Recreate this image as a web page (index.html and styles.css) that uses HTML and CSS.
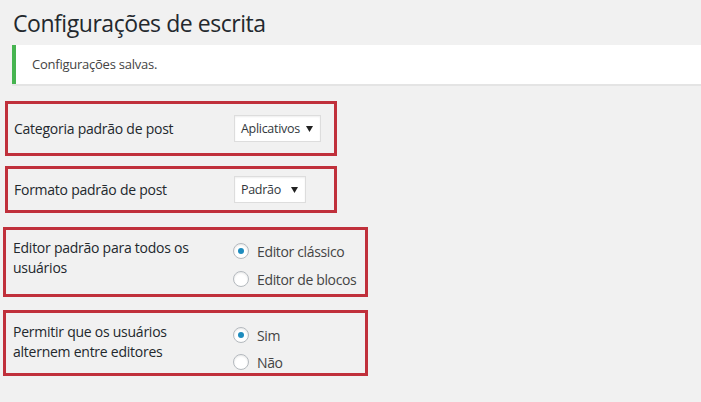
FILE: index.html
```html
<!DOCTYPE html>
<html lang="pt-BR">
<head>
<meta charset="utf-8">
<title>Configurações de escrita</title>
<link rel="stylesheet" href="styles.css">
</head>
<body>
<div class="page">
  <h1 class="title">Configurações de escrita</h1>
  <div class="notice"><p>Configurações salvas.</p></div>
  <div class="settings">
    <div class="row row-select row-cat">
      <div class="label">Categoria padrão de post</div>
      <div class="select select-cat">
        <span>Aplicativos</span>
        <svg class="arrow" width="7" height="6" viewBox="0 0 7 6"><path d="M0 0H7L3.5 6Z" fill="#222"/></svg>
      </div>
    </div>
    <div class="row row-select row-format">
      <div class="label">Formato padrão de post</div>
      <div class="select select-format">
        <span>Padrão</span>
        <svg class="arrow" width="7" height="6" viewBox="0 0 7 6"><path d="M0 0H7L3.5 6Z" fill="#222"/></svg>
      </div>
    </div>
    <div class="row row-radio row-editor">
      <div class="label">Editor padrão para todos os usuários</div>
      <div class="radios">
        <div class="radio-item"><span class="radio checked"></span><span class="radio-text">Editor clássico</span></div>
        <div class="radio-item"><span class="radio"></span><span class="radio-text">Editor de blocos</span></div>
      </div>
    </div>
    <div class="row row-radio row-switch">
      <div class="label">Permitir que os usuários alternem entre editores</div>
      <div class="radios">
        <div class="radio-item"><span class="radio checked"></span><span class="radio-text">Sim</span></div>
        <div class="radio-item"><span class="radio"></span><span class="radio-text">Não</span></div>
      </div>
    </div>
  </div>
</div>
</body>
</html>
```

FILE: styles.css
```css
* { box-sizing: border-box; }
html, body { margin: 0; padding: 0; }
body {
  background: #f1f1f1;
  color: #23282d;
  font-family: "Open Sans", "Noto Sans", "Liberation Sans", sans-serif;
  width: 701px;
  height: 402px;
  overflow: hidden;
}
.title {
  margin: 0;
  padding: 9px 0 0 13px;
  font-size: 23px;
  line-height: 29px;
  font-weight: 400;
  letter-spacing: -0.45px;
  color: #23282d;
}
.notice {
  margin: 7px 0 0 12px;
  background: #fff;
  border-left: 4px solid #46b450;
  box-shadow: 0 2px 0 #e4e4e4;
  padding: 10px 16px;
  height: 39px;
}
.notice p {
  margin: 0;
  font-size: 13px;
  line-height: 19px;
  letter-spacing: -0.24px;
  color: #444;
}
.settings {
  display: flex;
  flex-direction: column;
  align-items: flex-start;
  padding-top: 17px;
}
.row {
  display: flex;
  border: 3px solid #c0303b;
}
.row-select {
  margin-left: 5px;
  width: 332px;
  align-items: center;
  padding-left: 6px;
}
.row-cat { height: 55px; }
.row-format { height: 47px; margin-top: 10px; }
.row-radio {
  margin-left: 3px;
  width: 365px;
  align-items: flex-start;
  padding-left: 7px;
}
.row-editor { height: 70px; margin-top: 14px; padding-top: 8px; }
.row-switch { height: 66px; margin-top: 13px; padding-top: 9px; }
.label {
  width: 220px;
  flex: none;
  font-size: 14px;
  line-height: 20px;
  letter-spacing: -0.25px;
  padding-right: 26px;
}
.select {
  display: flex;
  align-items: center;
  justify-content: space-between;
  height: 27px;
  background: #fff;
  border: 1px solid #ddd;
  box-shadow: inset 0 1px 2px rgba(0,0,0,.07);
  padding: 0 7px 0 6px;
  font-size: 12.5px;
  letter-spacing: -0.3px;
  color: #32373c;
}
.select-cat { width: 87px; }
.select-format { width: 72px; }
.arrow { display: block; }
.radios {
  display: flex;
  flex-direction: column;
  gap: 2px;
}
.row-switch .radios { gap: 1px; }
.radio-item {
  display: flex;
  align-items: center;
  height: 26px;
}
.radio {
  width: 16px;
  height: 16px;
  border-radius: 50%;
  border: 1px solid #b4b9be;
  background: #fff;
  box-shadow: inset 0 1px 2px rgba(0,0,0,.1);
  display: flex;
  align-items: center;
  justify-content: center;
  flex: none;
}
.radio.checked::before {
  content: "";
  width: 6px;
  height: 6px;
  border-radius: 50%;
  background: #1e8cbe;
}
.radio-text {
  margin-left: 8px;
  font-size: 14px;
  letter-spacing: -0.35px;
  color: #444;
}
```
